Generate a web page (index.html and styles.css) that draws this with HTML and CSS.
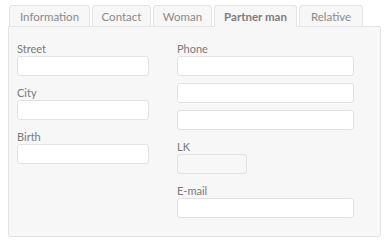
FILE: index.html
```html
<!DOCTYPE html>
<html lang="en">
<head>
  <meta charset="UTF-8">
  <title>Partner man</title>
  <link rel="stylesheet" href="styles.css">
</head>
<body>
  <div class="tabs">
    <div class="tab-bar">
      <div class="tab tab-info">Information</div>
      <div class="tab tab-contact">Contact</div>
      <div class="tab tab-woman">Woman</div>
      <div class="tab tab-partner active">Partner man</div>
      <div class="tab tab-relative">Relative</div>
    </div>

    <div class="panel">
      <div class="col col-left">
        <div class="field">
          <label>Street</label>
          <input type="text">
        </div>
        <div class="field">
          <label>City</label>
          <input type="text">
        </div>
        <div class="field">
          <label>Birth</label>
          <input type="text">
        </div>
      </div>

      <div class="col col-right">
        <div class="field">
          <label>Phone</label>
          <input type="text">
          <input type="text">
          <input type="text">
        </div>
        <div class="field">
          <label>LK</label>
          <input type="text" class="short" disabled>
        </div>
        <div class="field">
          <label>E-mail</label>
          <input type="text">
        </div>
      </div>
    </div>
  </div>
</body>
</html>
```

FILE: styles.css
```css
body {
  margin: 0;
  padding: 5px 10px 0 8px;
  background-color: #ffffff;
  font-family: Lato, "Open Sans", sans-serif;
  font-size: 11px;
  color: #7a7a7a;
}

.tabs {
  width: 373px;
}

.tab-bar {
  display: flex;
  gap: 2px;
  padding-left: 1px;
  margin-bottom: -1px;
}

.tab {
  flex-shrink: 0;
  height: 22px;
  line-height: 21px;
  box-sizing: border-box;
  text-align: center;
  white-space: nowrap;
  border: 1px solid #e4e4e4;
  border-radius: 3px 3px 0 0;
  background-color: #f7f7f7;
  color: #8a8a8a;
  font-size: 11.5px;
}

.tab-info { width: 81px; }
.tab-contact { width: 59px; }
.tab-woman { width: 59px; }
.tab-partner { width: 83px; }
.tab-relative { width: 64px; }

.tab.active {
  font-weight: bold;
  color: #7d7d7d;
  border-bottom-color: #f7f7f7;
}

.panel {
  display: flex;
  gap: 28px;
  height: 211px;
  box-sizing: border-box;
  padding: 14px 8px 17px 8px;
  border: 1px solid #e4e4e4;
  border-radius: 0 2px 2px 2px;
  background-color: #f7f7f7;
}

.col-left {
  width: 132px;
}

.col-right {
  width: 177px;
}

.field {
  display: flex;
  flex-direction: column;
  gap: 7px;
  margin-bottom: 9px;
}

.field label {
  line-height: 15px;
  margin-bottom: -7px;
}

.field input {
  height: 20px;
  box-sizing: border-box;
  margin: 0;
  padding: 2px 5px;
  border: 1px solid #e2e2e2;
  border-radius: 3px;
  background-color: #ffffff;
  font: inherit;
}

.field input.short {
  width: 70px;
  background-color: #f7f7f7;
}
```
